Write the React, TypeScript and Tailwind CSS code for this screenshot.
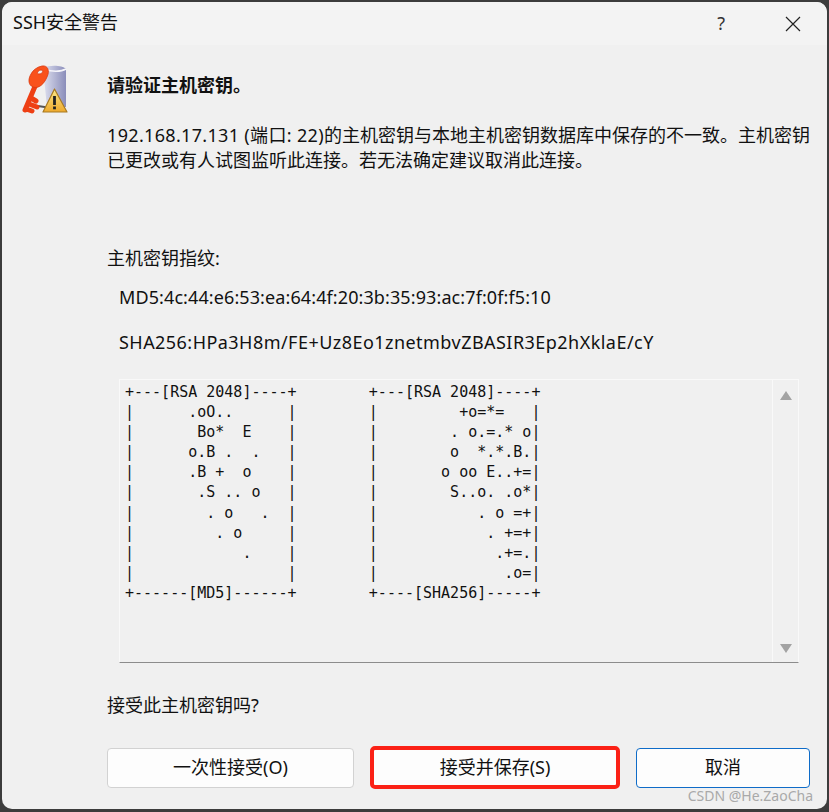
const sans = "font-['Noto_Sans','Noto_Sans_CJK_SC',sans-serif]";

const art = `+---[RSA 2048]----+        +---[RSA 2048]----+
|      .oO..      |        |         +o=*=   |
|       Bo*  E    |        |        . o.=.* o|
|      o.B .  .   |        |        o  *.*.B.|
|      .B +  o    |        |       o oo E..+=|
|       .S .. o   |        |        S..o. .o*|
|        . o   .  |        |           . o =+|
|         . o     |        |            . +=+|
|            .    |        |             .+=.|
|                 |        |              .o=|
+------[MD5]------+        +----[SHA256]-----+`;

function KeyIcon() {
  return (
    <svg width="48" height="50" viewBox="0 0 48 50" className="shrink-0">
      <defs>
        <linearGradient id="db" x1="0" x2="1" y1="0" y2="0">
          <stop offset="0" stopColor="#dfe1f0" />
          <stop offset="1" stopColor="#8a8dba" />
        </linearGradient>
        <linearGradient id="warn" x1="0" x2="0" y1="0" y2="1">
          <stop offset="0" stopColor="#fbe78a" />
          <stop offset="1" stopColor="#eea92c" />
        </linearGradient>
      </defs>
      {/* database */}
      <path d="M22 4 C28 1 41 1 45 5 L45 43 L26 43 Z" fill="url(#db)" />
      <path d="M24 5 C30 8 40 8 45 5" fill="none" stroke="#f4f4fa" strokeWidth="1.500" />
      <path d="M17 42 L30 44" stroke="#555" strokeWidth="2" />
      {/* key */}
      <path
        d="M15 20 L4 46 M10 34 L15 37 M8 40 L16 43 M5 45 L11 47"
        fill="none"
        stroke="#ee3f14"
        strokeWidth="5"
        strokeLinecap="round"
      />
      <path
        fillRule="evenodd"
        fill="#f9521c"
        stroke="#d9380f"
        strokeWidth="0.800"
        d="M21 2 C27 1 29 7 26 13 C23 20 18 25 12 23 C7 21 7 15 10 10 C12 6 16 3 21 2 Z M20 6 C17 6 15 10 18 10 C22 10 23 6 20 6 Z"
      />
      {/* warning sign */}
      <path
        d="M33.500 25 L46 48 L22 48 Z"
        fill="url(#warn)"
        stroke="#a87a22"
        strokeWidth="1.200"
        strokeLinejoin="round"
      />
      <path d="M33.500 32 L33.500 41" stroke="#222" strokeWidth="2.800" />
      <rect x="32.100" y="42.500" width="2.800" height="2.800" fill="#222" />
    </svg>
  );
}

function Btn({ label, className }: { label: string; className: string }) {
  return (
    <button className={`h-10 rounded-[4px] bg-[#fdfdfd] text-[18px] text-[#111] ${className}`}>
      {label}
    </button>
  );
}

export default function App() {
  return (
    <div className={`h-[812px] w-[829px] bg-[#3c3c3c] pt-[2px] pl-[2px] pr-[2px] pb-[3px] ${sans}`}>
      <div className="relative flex h-full flex-col overflow-hidden rounded-[10px] bg-[#f0f0f0] text-[#111]">
        {/* title bar */}
        <div className="flex h-[43px] shrink-0 items-center bg-[#f3f3f3] pl-[11px]">
          <span className="-mt-[2px] flex-1 text-[18px]">SSH安全警告</span>
          <span className="mr-[60px] text-[18px] text-[#333]">?</span>
          <svg width="16" height="16" viewBox="0 0 16 16" className="mr-[26px]">
            <path d="M1 1 L15 15 M15 1 L1 15" stroke="#222" strokeWidth="1.200" />
          </svg>
        </div>

        <div className="flex flex-1 flex-col pl-[105px]">
          <div className="-ml-[86px] mt-[19px] flex h-[50px] items-start gap-[38px]">
            <KeyIcon />
            <div className="mt-[9px] text-[18px] leading-[24px] font-bold">请验证主机密钥。</div>
          </div>

          <p className="mt-[9px] w-[710px] text-[18px] leading-[25px]">
            <span className="tracking-[0.33px]">192.168.17.131 (端口: 22)</span>的主机密钥与本地主机密钥数据库中保存的不一致。主机密钥
            <br />
            已更改或有人试图监听此连接。若无法确定建议取消此连接。
          </p>

          <div className="mt-[73px] text-[18px] leading-[24px]">主机密钥指纹:</div>
          <div className="mt-[15px] pl-[12px] text-[18px] leading-[24px] tracking-[0.1px]">
            MD5:4c:44:e6:53:ea:64:4f:20:3b:35:93:ac:7f:0f:f5:10
          </div>
          <div className="mt-[21px] pl-[12px] text-[18px] leading-[24px] tracking-[0.46px]">
            SHA256:HPa3H8m/FE+Uz8Eo1znetmbvZBASIR3Ep2hXklaE/cY
          </div>

          {/* key art box */}
          <div className="mt-[25px] ml-[12px] flex h-[284px] w-[680px] border border-[#f9f9f9] border-b-[#8c8c8c]">
            <pre className="flex-1 pt-[2px] pl-[5px] font-['DejaVu_Sans_Mono','Liberation_Mono',monospace] text-[15px] leading-[20.1px] text-[#111]">
              {art}
            </pre>
            <div className="flex w-[26px] flex-col items-center justify-between border-l border-[#f9f9f9] pt-[11px] pb-[9px]">
              <div className="h-0 w-0 border-x-[6px] border-b-[9px] border-x-transparent border-b-[#a3a3a3]" />
              <div className="h-0 w-0 border-x-[6px] border-t-[9px] border-x-transparent border-t-[#a3a3a3]" />
            </div>
          </div>

          <div className="mt-[30px] text-[18px] leading-[24px]">接受此主机密钥吗?</div>

          <div className="mt-[29px] flex items-center">
            <Btn label="一次性接受(O)" className="w-[247px] border border-[#d2d2d2]" />
            <Btn
              label="接受并保存(S)"
              className="ml-[16px] h-[43px] w-[250px] rounded-[5px] border-[4px] border-[#fb2116]"
            />
            <Btn label="取消" className="ml-[16px] w-[174px] border border-[#0f6cc8]" />
          </div>
        </div>

        {/* csdn watermark */}
        <span className="absolute right-[14px] bottom-[3px] text-[14px] text-[#a9a9a9]">
          CSDN @He.ZaoCha
        </span>
      </div>
    </div>
  );
}
